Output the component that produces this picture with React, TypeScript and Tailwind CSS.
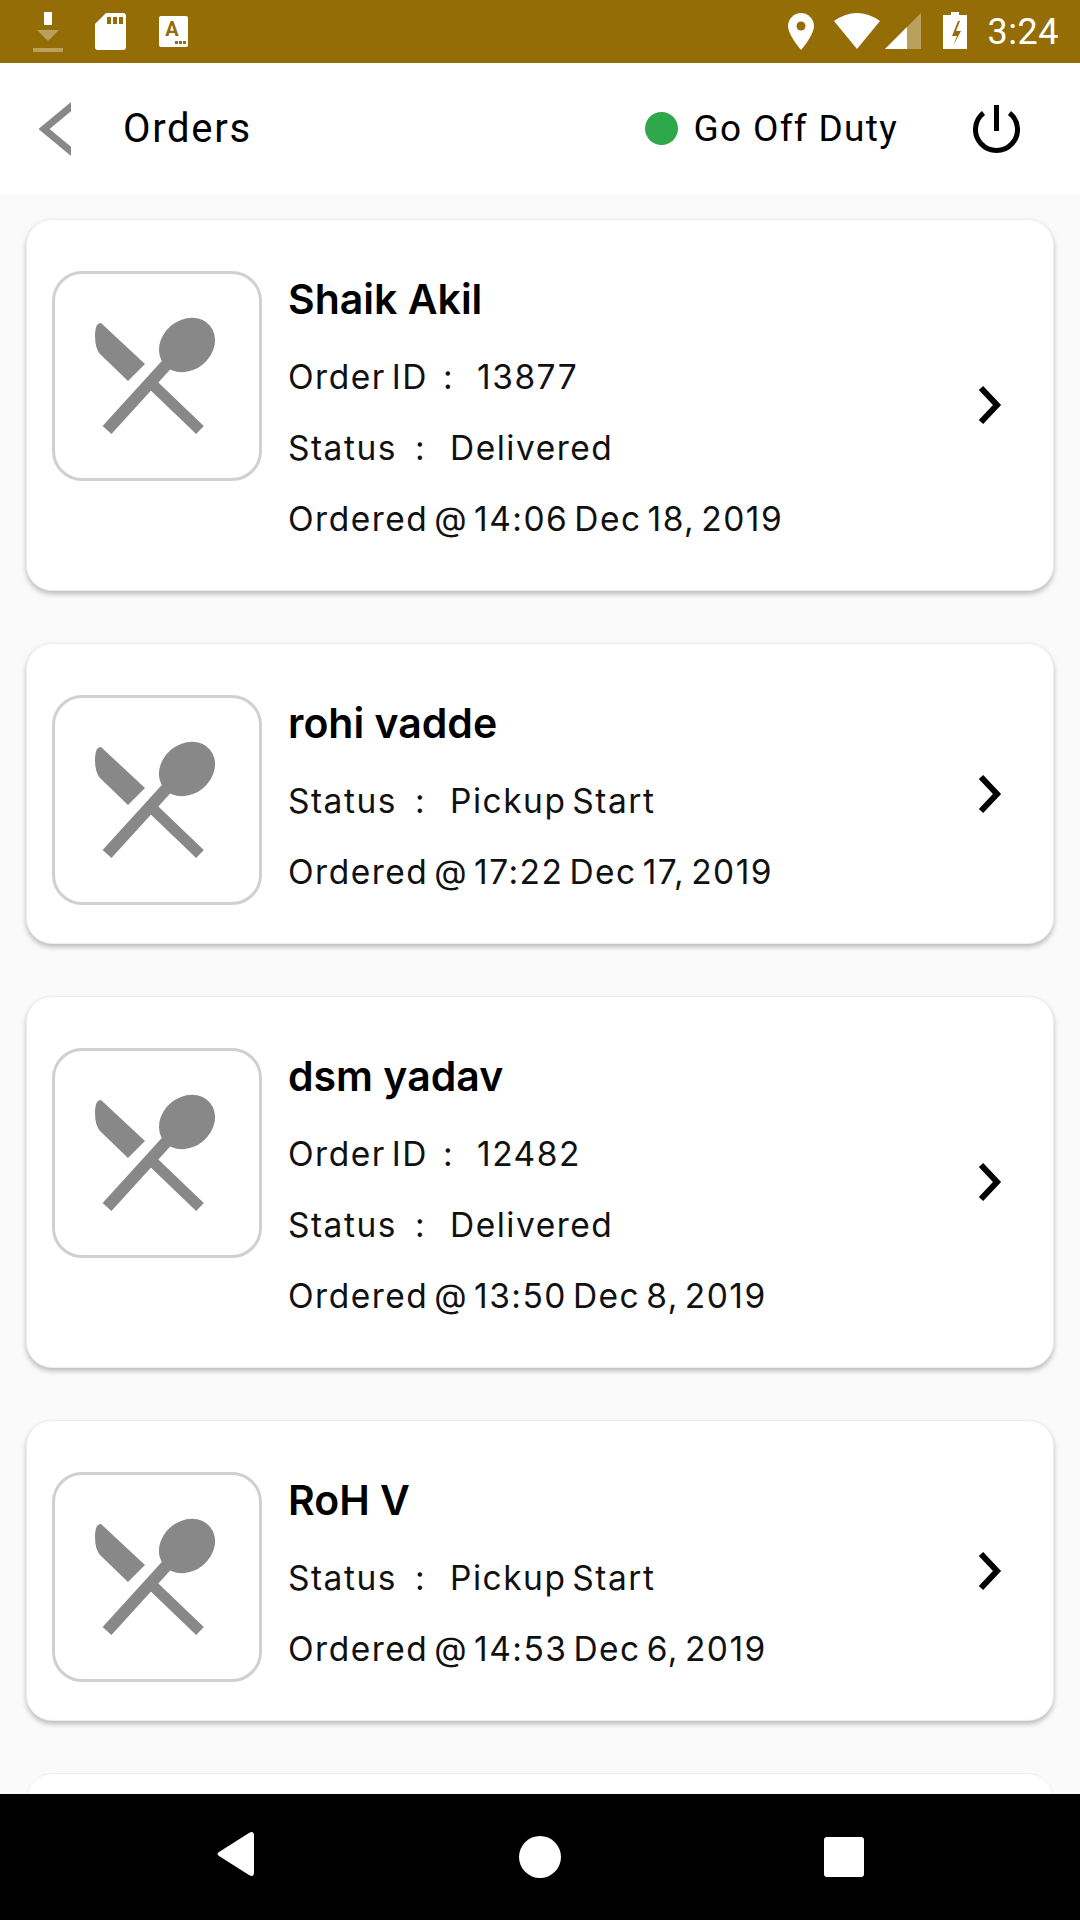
const orders = [
  { name: 'Shaik Akil', orderId: '13877', status: 'Delivered', ordered: 'Ordered @ 14:06 Dec 18, 2019' },
  { name: 'rohi vadde', status: 'Pickup Start', ordered: 'Ordered @ 17:22 Dec 17, 2019' },
  { name: 'dsm yadav', orderId: '12482', status: 'Delivered', ordered: 'Ordered @ 13:50 Dec 8, 2019' },
  { name: 'RoH V', status: 'Pickup Start', ordered: 'Ordered @ 14:53 Dec 6, 2019' },
];

function StatusIcons() {
  return (
    <svg width="200" height="63" viewBox="0 0 200 63" className="shrink-0">
      <g fill="#fff" opacity="0.35">
        <path d="M37 30h22L48 41z" />
        <rect x="33" y="48" width="30" height="4" />
      </g>
      <rect x="44" y="12" width="8" height="13" fill="#fff" />
      <path d="M106 13h17a3 3 0 0 1 3 3v31a3 3 0 0 1-3 3H98a3 3 0 0 1-3-3V24z" fill="#fff" />
      <path d="M107 17h4v7h-4zM113 17h4v7h-4zM119 17h4v7h-4z" fill="#946d06" />
      <rect x="159" y="16" width="29" height="31" rx="2" fill="#fff" />
      <text x="172" y="36" textAnchor="middle" fontSize="20" fontWeight="700" fill="#946d06" fontFamily="Roboto, sans-serif">A</text>
      <path d="M175 41h3v3h-3zM179 41h3v3h-3zM183 41h3v3h-3z" fill="#946d06" />
    </svg>
  );
}

function FoodIcon() {
  return (
    <div className="w-[210px] h-[210px] shrink-0 rounded-[30px] border-[3px] border-[#d0d0d0] blur-[0.6px]">
      <svg width="204" height="204" viewBox="55 275 204 204">
        <g fill="#888">
          <path d="M101 324l44 41-17 17-28-27q-5-6-5-18 0-13 6-13z" />
          <ellipse cx="187" cy="346" rx="30" ry="25" transform="rotate(-40 187 346)" />
        </g>
        <path d="M168 364L107 431" stroke="#888" strokeWidth="12" fill="none" />
        <path d="M153 386l47 45" stroke="#888" strokeWidth="11" fill="none" />
      </svg>
    </div>
  );
}

function DetailRow({ label, value }: { label: string; value: string }) {
  return (
    <div className="h-[71px] flex items-center whitespace-pre">
      <span>{label}</span>
      <span className="ml-[18px]">:</span>
      <span className="ml-[24px]">{value}</span>
    </div>
  );
}

function OrderIdRow({ value }: { value: string }) {
  return (
    <div className="h-[71px] flex items-center whitespace-pre">
      <span>Order ID</span>
      <span className="ml-[15px]">:</span>
      <span className="ml-[23px]">{value}</span>
    </div>
  );
}

function OrderCard({ order }: { order: (typeof orders)[number] }) {
  return (
    <div className="flex items-center bg-white rounded-[26px] border border-[#eeeeee] shadow-[0_3px_5px_rgba(0,0,0,0.25)] pl-[25px] pr-[47px] shrink-0">
      <div className="flex flex-1 items-start pt-[51px] pb-[35px]">
        <FoodIcon />
        <div className="ml-[26px] flex flex-col font-['Inter',sans-serif] tracking-[1.5px] [word-spacing:-5px] text-[#111] text-[33.5px]">
          <div className="h-[60px] -mt-[1px] mb-[12px] flex items-center text-[41px] font-semibold text-black tracking-normal [word-spacing:0px]">{order.name}</div>
          {order.orderId && <OrderIdRow value={order.orderId} />}
          <DetailRow label="Status" value={order.status} />
          <div className="h-[71px] flex items-center">{order.ordered}</div>
        </div>
      </div>
      <svg width="30" height="40" viewBox="0 0 30 40" className="shrink-0">
        <path d="M5 3l16 17L5 37" fill="none" stroke="#000" strokeWidth="6" />
      </svg>
    </div>
  );
}

export default function App() {
  return (
    <div className="w-[1080px] h-[1920px] flex flex-col overflow-hidden bg-[#fafafa] font-['Roboto',sans-serif]">
      <div className="h-[63px] bg-[#946d06] flex items-center shrink-0">
        <StatusIcons />
        <div className="flex-1" />
        <div className="flex items-center text-white text-[36px] tracking-[0.5px] pr-[21px]">
          <svg width="202" height="63" viewBox="786 0 202 63">
            <path d="M801 13c-7 0-13 6-13 13 0 9 13 24 13 24s13-15 13-24c0-7-6-13-13-13z" fill="#fff" />
            <circle cx="801" cy="26" r="4.5" fill="#946d06" />
            <path d="M834 21q23-16 46 0l-23 28z" fill="#fff" />
            <path d="M885 49l36-36v36z" fill="#fff" opacity="0.35" />
            <path d="M885 49l22-22v22z" fill="#fff" />
            <path d="M951 15v-3h8v3h8v34h-24V15z" fill="#fff" />
            <path d="M958 21l-6 15h5l-4 10 8-15h-5l4-10z" fill="#946d06" />
          </svg>
          <span>3:24</span>
        </div>
      </div>

      <div className="h-[131px] bg-white flex items-center shrink-0 pl-[39px] pr-[60px] text-black">
        <svg width="32" height="54" viewBox="0 0 32 54" className="shrink-0 blur-[0.5px]">
          <path d="M34 3L5 27l29 24" fill="none" stroke="#888" strokeWidth="7" />
        </svg>
        <span className="ml-[52px] text-[40px] tracking-[1.7px]">Orders</span>
        <div className="flex-1" />
        <span className="w-[33px] h-[33px] rounded-full bg-[#2ea84a]" />
        <span className="ml-[16px] text-[37px] tracking-[1.3px]">Go Off Duty</span>
        <svg width="47" height="48" viewBox="0 0 46 48" className="ml-[75px] shrink-0">
          <path d="M10 8a21 21 0 1 0 26 0" fill="none" stroke="#000" strokeWidth="5" />
          <path d="M23 0v26" fill="none" stroke="#000" strokeWidth="5" />
        </svg>
      </div>

      <div className="flex-1 overflow-hidden flex flex-col gap-[52px] pt-[25px] px-[26px]">
        {orders.map((order) => (
          <OrderCard key={order.name} order={order} />
        ))}
        <div className="h-[100px] bg-white rounded-t-[26px] border border-[#eeeeee] shrink-0" />
      </div>

      <div className="h-[126px] bg-black flex items-center shrink-0 relative">
        <svg width="1080" height="126" viewBox="0 1794 1080 126">
          <path d="M254 1836v36q0 6-5 3l-30-19q-3-2 0-4l30-19q5-3 5 3z" fill="#fff" />
          <circle cx="540" cy="1857" r="21" fill="#fff" />
          <rect x="824" y="1837" width="40" height="40" rx="3" fill="#fff" />
        </svg>
      </div>
    </div>
  );
}
